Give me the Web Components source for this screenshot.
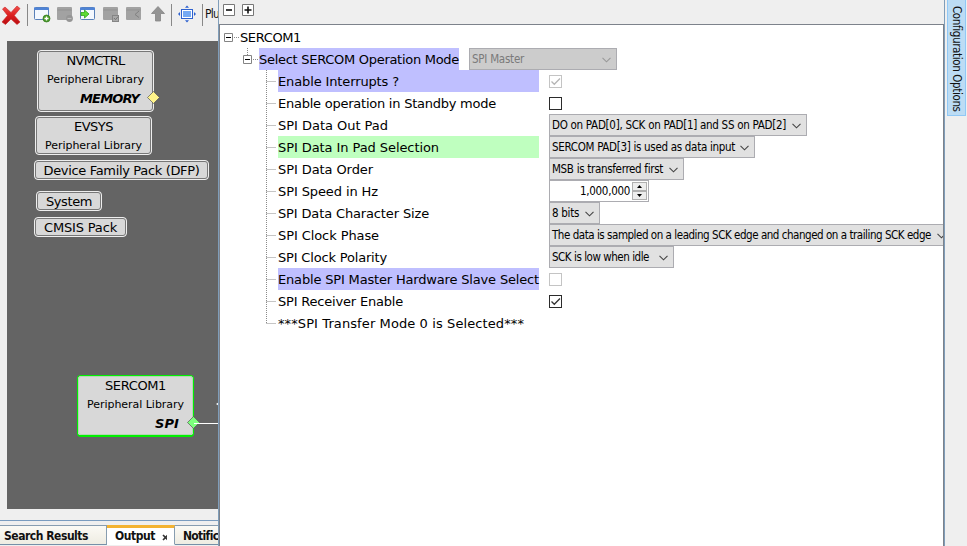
<!DOCTYPE html>
<html lang="en"><head><meta charset="utf-8"><title>Configurator</title>
<style>html,body{margin:0;height:100%;overflow:hidden;background:#efefef}</style></head><body>
<config-app></config-app>
<script>
const UI='"DejaVu Sans Condensed","DejaVu Sans",sans-serif', WIDE='"DejaVu Sans",sans-serif';
const define=(name,render,after)=>customElements.define(name,class extends HTMLElement{
  connectedCallback(){
    if(this.shadowRoot)return;
    this.attachShadow({mode:'open'}).innerHTML=render(this);
    if(after)after(this);
  }
});
const a=(e,n,d='')=>e.getAttribute(n)??d;

/* A single line of text, spaced to fill the given width. */
const ctx=document.createElement('canvas').getContext('2d');
define('fit-text',()=>`<style>:host{display:inline-block;white-space:pre;flex:none}</style><slot></slot>`,e=>{
  const w=+a(e,'w'),t=e.textContent,s=getComputedStyle(e);
  e.style.width=w+'px';
  ctx.font=`${s.fontStyle} ${s.fontWeight} ${s.fontSize} ${s.fontFamily}`;
  e.style.letterSpacing=((w-ctx.measureText(t).width)/t.length).toFixed(3)+'px';
});

const icons={
close:[22,22,`<defs><linearGradient id="g" x2="0" y2="1"><stop stop-color="#f0504c"/><stop offset=".5" stop-color="#dc1f1f"/><stop offset="1" stop-color="#b80d12"/></linearGradient></defs><path d="M5 3 11 8.500 17 2 20 4.500 14.300 11.500 20 18 17 20.500 11 15 5.500 20.500 2 18 7.500 11.500 2.500 5Z" fill="url(#g)" stroke="#c22" stroke-width=".6"/>`],
add:[18,18,`<rect x="1.500" y="2.500" width="14" height="12" rx="1" fill="#f4f8fe" stroke="#5980b8"/><path d="M1 2.500h15v2.500H1z" fill="#4f83d6"/><circle cx="13.500" cy="13.500" r="3.500" fill="#4a9c2b" stroke="#2c7416" stroke-width=".7"/><path d="M11.500 13.500h4m-2-2v4" stroke="#fff" stroke-width="1.300"/>`],
remove:[18,18,`<rect x="1" y="2" width="15" height="13" rx="1" fill="#a2a2a2"/><path d="M1.500 5h14" stroke="#919191"/><circle cx="13.500" cy="13.500" r="3.400" fill="#959595"/><path d="M11.500 13.500h4" stroke="#bbb" stroke-width="1.200"/>`],
imp:[18,18,`<rect x="1.500" y="2.500" width="14" height="12" rx="1" fill="#f4f8fe" stroke="#5980b8"/><path d="M1 2.500h15v2.500H1z" fill="#4f83d6"/><path d="M2 7.500h3.500V5L10 9l-4.500 4v-2.500H2z" fill="#5ddb35" stroke="#2fa51c" stroke-width=".8"/>`],
check:[18,18,`<rect x="1" y="2" width="15" height="13" rx="1" fill="#a2a2a2"/><path d="M1.500 5h14" stroke="#919191"/><rect x="10.500" y="10.500" width="6" height="6" fill="#a8a8a8" stroke="#858585"/><path d="m12 13 1.500 1.700 2.500-3" fill="none" stroke="#777"/>`],
back:[18,18,`<rect x="1" y="2" width="15" height="13" rx="1" fill="#a2a2a2"/><path d="M1.500 5h14" stroke="#919191"/><path d="m14 6-4 3.500 4 3" fill="none" stroke="#808080"/>`],
up:[16,18,`<path d="M8 1.500 14.500 8.500H10.500V16H5.500V8.500H1.500Z" fill="#949494" stroke="#858585" stroke-width=".8"/>`],
fitv:[18,18,`<rect x="3.500" y="4.500" width="11" height="9" fill="#fff" stroke="#2f62cf"/><rect x="5" y="6" width="8" height="6" fill="#76aaf3"/><path d="m9 .5 2 2.200H7zM9 17.500l2-2.200H7zM0 9l2-2v4zM18 9l-2-2v4z" fill="#2c61d0"/>`]};
define('tool-icon',e=>{const[w,h,p]=icons[a(e,'name')];return`<style>:host{display:block;flex:none}svg{display:block}</style><svg width="${w}" height="${h}">${p}</svg>`});

define('tool-bar',()=>`<style>
:host{display:grid;grid-template-columns:22px 5px 1px 5px 18px 5px 18px 5px 18px 5px 18px 5px 18px 7px 16px 5px 1px 6px 18px 6px 1px 2px 1fr;padding-top:4px;height:37px;box-sizing:border-box;font:12px ${UI};color:#111;overflow:hidden;background:#efefef}
tool-icon{margin-top:1px}tool-icon[name=close]{margin-top:0}i{width:1px;height:22px;background:#888}fit-text{margin-top:3px}
</style><tool-icon name="close"></tool-icon><span></span><i></i><span></span><tool-icon name="add"></tool-icon><span></span><tool-icon name="remove"></tool-icon><span></span><tool-icon name="imp"></tool-icon><span></span><tool-icon name="check"></tool-icon><span></span><tool-icon name="back"></tool-icon><span></span><tool-icon name="up"></tool-icon><span></span><i></i><span></span><tool-icon name="fitv"></tool-icon><span></span><i></i><span></span><fit-text w="14">Plu</fit-text>`);

/* Component block on the project graph. */
define('graph-node',e=>`<style>
:host{position:absolute;left:${a(e,'x')}px;top:${a(e,'y')}px;width:${a(e,'w')}px;height:${a(e,'h')}px;box-sizing:border-box;border:1px solid #eee;border-radius:4px;background:#d8d8d8;color:#000;font:13px ${WIDE};display:block}
:host([selected]){border-color:#00f000;border-bottom-width:2px}
.in{box-sizing:border-box;height:100%;border:1px solid #777;border-radius:3px;display:flex;flex-direction:column;align-items:center;line-height:19px}
:host([selected]) .in{border-color:#b4d6b4}
.in>:first-child{margin-top:-1px}
.sub{font-size:11px}.port{font-weight:bold;font-style:italic;align-self:flex-end;padding-right:13px}
svg{position:absolute;right:-7px;top:40px}
</style><div class="in"><fit-text w="${a(e,'tw')}">${a(e,'name')}</fit-text>
${e.hasAttribute('sub')?`<fit-text class="sub" w="97">Peripheral Library</fit-text>`:''}
${e.hasAttribute('port')?`<span class="port"><fit-text w="${a(e,'pw')}">${a(e,'port')}</fit-text></span><svg width="13" height="13"><path d="m6.500.5 6 6-6 6-6-6z" fill="${a(e,'pin')}" stroke="#555" stroke-width=".7"/></svg>`:''}</div>`);

define('graph-canvas',()=>`<style>:host{display:block;position:relative;margin:4px 0 0 7px;height:468px;background:#646464;overflow:hidden}
.wire{position:absolute;left:187px;top:382px;width:26px;height:1px;background:#fff}.tip{position:absolute;left:209px;top:361px}</style>
<graph-node x="30" y="9" w="117" h="62" name="NVMCTRL" tw="58" sub port="MEMORY" pw="59" pin="#fff48a"></graph-node>
<graph-node x="28" y="75" w="117" h="39" name="EVSYS" tw="39" sub></graph-node>
<graph-node x="27" y="119" w="175" h="20" name="Device Family Pack (DFP)" tw="156"></graph-node>
<graph-node x="29" y="150" w="66" h="20" name="System" tw="46"></graph-node>
<graph-node x="27" y="176" w="93" h="20" name="CMSIS Pack" tw="73"></graph-node>
<graph-node selected x="70" y="334" w="117" h="62" name="SERCOM1" tw="61" sub port="SPI" pw="24" pin="#7dff7d"></graph-node>
<div class="wire"></div><svg class="tip" width="3" height="4"><path d="M0 2 3 0V4Z" fill="#fff"/></svg>`);

define('output-tabs',()=>`<style>
:host{display:flex;margin-top:11px;height:26px;box-sizing:border-box;border-top:1px solid #7a9cbf;padding-top:4px;font:bold 12px/19px ${UI};color:#111;overflow:hidden}
div{flex:none;box-sizing:border-box;height:20px;border:1px solid #879db0;border-bottom-color:#7590a8;background:linear-gradient(#fbfaf5,#eeece2);padding:1px 3px 0;display:flex;white-space:nowrap;border-left:0}
.on{background:#fff;border-top:3px solid #f3b332;border-bottom-color:#fff;padding:0 7px 0 8px;line-height:17px;gap:7px}
svg{margin-top:6px}
</style><div style="width:107px;padding-left:4px"><fit-text w="84">Search Results</fit-text></div><div class="on" style="width:68px"><fit-text w="40">Output</fit-text><svg width="7" height="7"><path d="m1 1 5 5M6 1 1 6" stroke="#333" stroke-width="1.600"/></svg></div><div style="width:60px;padding-left:8px"><fit-text w="35">Notific</fit-text></div>`);

define('combo-box',e=>`<style>
:host{display:flex;flex:none;box-sizing:border-box;width:${a(e,'w')}px;height:22px;border:1px solid #acacb1;background:#e1e1e1;padding:0 5px 0 2px;justify-content:space-between;align-items:center;font:11.500px/18px ${UI};color:#000}
:host([off]){background:#ccc;color:#7a7a7a}svg{flex:none;margin-top:1px}fit-text{margin-top:-1px}</style>
<fit-text w="${a(e,'tw')}">${e.textContent}</fit-text><svg width="9" height="6"><path d="m.5.8 4 4 4-4" fill="none" stroke="${e.hasAttribute('off')?'#999':'#444'}" stroke-width="1.100"/></svg>`);

define('check-box',e=>{const c=e.hasAttribute('off')?'#c4c4c4':'#2b2b2b';return`<style>:host{display:block;width:13px;height:13px}svg{display:block}</style><svg width="13" height="13"><rect x=".5" y=".5" width="12" height="12" fill="#fff" stroke="${c}"/>${e.hasAttribute('on')?`<path d="m2.500 6.500 2.800 2.800L11 3.500" fill="none" stroke="${e.hasAttribute('off')?'#b5b5b5':'#333'}" stroke-width="1.300"/>`:''}</svg>`});

define('number-spinner',()=>`<style>
:host{display:flex;box-sizing:border-box;width:100px;height:22px;border:1px solid #acacb1;background:#fff;justify-content:flex-end;align-items:center;padding-right:1px;gap:2px;font:11.500px/18px ${UI};color:#000}
.b{display:grid;gap:0;width:15px}.b span{box-sizing:border-box;height:9px;border:1px solid #b0b0b0;background:#ededed;display:grid;place-items:center}svg{display:block}</style>
<fit-text w="50">1,000,000</fit-text><div class="b"><span><svg width="5" height="3"><path d="M0 3 2.500 0 5 3Z"/></svg></span><span><svg width="5" height="3"><path d="M0 0H5L2.500 3Z"/></svg></span></div>`);

define('tree-toggle',()=>`<style>:host{display:block;flex:none}svg{display:block}</style><svg width="9" height="9"><path d="M.5.5h8v8h-8z" fill="#fff" stroke="#848484"/><path d="M2 4.500h5" stroke="#000"/></svg>`);

define('tree-row',e=>{
  const last=e.hasAttribute('last'),bg=a(e,'fill','transparent');
  return`<style>
:host{display:flex;height:22px;align-items:center;font:13px/24px ${WIDE};color:#000;padding-left:46px}
.g{flex:none;width:12px;height:22px}
.l{flex:none;width:261px;height:22px;margin-right:10px;background:${bg}}fit-text{height:22px;display:block}
</style><svg class="g" width="12" height="22"><path d="M.5 0V${last?12:22}M.5 11.500H10" fill="none" stroke="#8a8a8a" stroke-dasharray="1 1"/></svg><div class="l"><fit-text w="${a(e,'tw')}">${a(e,'label')}</fit-text></div><slot></slot>`});

define('config-tree',()=>`<style>
:host{display:block;flex:1;box-sizing:border-box;border:1px solid #7d828b;border-bottom:0;background:#fff;padding-top:1px;overflow:hidden;font:13px/24px ${WIDE};color:#000}
.r{display:flex;height:22px;align-items:center}.d{height:1px;background:repeating-linear-gradient(90deg,#8a8a8a 0 1px,#fff 1px 2px);width:5px;margin:0 2px 0 1px}
.hl{background:#bfbfff;width:200px;height:22px;margin-right:10px}fit-text{height:22px;display:block}
.stem{position:relative}.stem::before{content:"";position:absolute;left:4px;top:-7px;height:7px;border-left:1px dotted #8a8a8a}
</style>
<div class="r" style="padding-left:4px"><tree-toggle></tree-toggle><i class="d"></i><fit-text w="61" style="margin-left:-1px">SERCOM1</fit-text></div>
<div class="r" style="padding-left:23px"><div class="stem"><tree-toggle></tree-toggle></div><i class="d"></i><div class="hl" style="margin-left:-1px"><fit-text w="200">Select SERCOM Operation Mode</fit-text></div><combo-box off w="148" tw="52">SPI Master</combo-box></div>
<tree-row label="Enable Interrupts ?" tw="121" fill="#bfbfff"><check-box on off></check-box></tree-row>
<tree-row label="Enable operation in Standby mode" tw="218"><check-box></check-box></tree-row>
<tree-row label="SPI Data Out Pad" tw="110"><combo-box w="258" tw="234">DO on PAD[0], SCK on PAD[1] and SS on PAD[2]</combo-box></tree-row>
<tree-row label="SPI Data In Pad Selection" tw="161" fill="#bfffbf"><combo-box w="206" tw="183">SERCOM PAD[3] is used as data input</combo-box></tree-row>
<tree-row label="SPI Data Order" tw="95"><combo-box w="135" tw="111">MSB is transferred first</combo-box></tree-row>
<tree-row label="SPI Speed in Hz" tw="100"><number-spinner></number-spinner></tree-row>
<tree-row label="SPI Data Character Size" tw="151"><combo-box w="51" tw="27">8 bits</combo-box></tree-row>
<tree-row label="SPI Clock Phase" tw="101"><combo-box w="403" tw="379">The data is sampled on a leading SCK edge and changed on a trailing SCK edge</combo-box></tree-row>
<tree-row label="SPI Clock Polarity" tw="109"><combo-box w="125" tw="97">SCK is low when idle</combo-box></tree-row>
<tree-row label="Enable SPI Master Hardware Slave Select" tw="261" fill="#bfbfff"><check-box off></check-box></tree-row>
<tree-row label="SPI Receiver Enable" tw="125"><check-box on></check-box></tree-row>
<tree-row label="***SPI Transfer Mode 0 is Selected***" tw="246" last></tree-row>`);

define('config-panel',()=>`<style>
:host{display:flex;flex-direction:column;box-sizing:border-box;border:1px solid #7f9db9;border-width:0 1px;background:#efefef;min-width:0}
header{height:24px;flex:none;display:flex;gap:7px;padding:4px 0 0 4px;box-sizing:border-box}svg{display:block}
</style><header><svg width="12" height="12"><path d="M.5.5h11v11H.5z" fill="#fff" stroke="#777"/><path d="M3 6h6" stroke="#111" stroke-width="1.600"/></svg><svg width="12" height="12"><path d="M.5.5h11v11H.5z" fill="#fff" stroke="#777"/><path d="M2.500 6h7M6 2.500v7" stroke="#111" stroke-width="1.600"/></svg></header><config-tree></config-tree>`);

define('side-tab',()=>`<style>:host{display:block;box-sizing:border-box;width:19px;height:116px;margin-left:2px;border:1px solid #90c8f6;border-top:0;background:#bcdcf4;writing-mode:vertical-rl;font:11.500px/17px ${UI};color:#111;padding-top:6px}
span{letter-spacing:-.37px;white-space:pre}</style><span>Configuration Options</span>`);

define('config-app',()=>`<style>:host{display:grid;grid-template-columns:218px 727px 22px;height:546px;background:#efefef;overflow:hidden}.left{min-width:0;overflow:hidden}</style>
<div class="left"><tool-bar></tool-bar><graph-canvas></graph-canvas><output-tabs></output-tabs></div><config-panel></config-panel><side-tab></side-tab>`);
</script></body></html>
